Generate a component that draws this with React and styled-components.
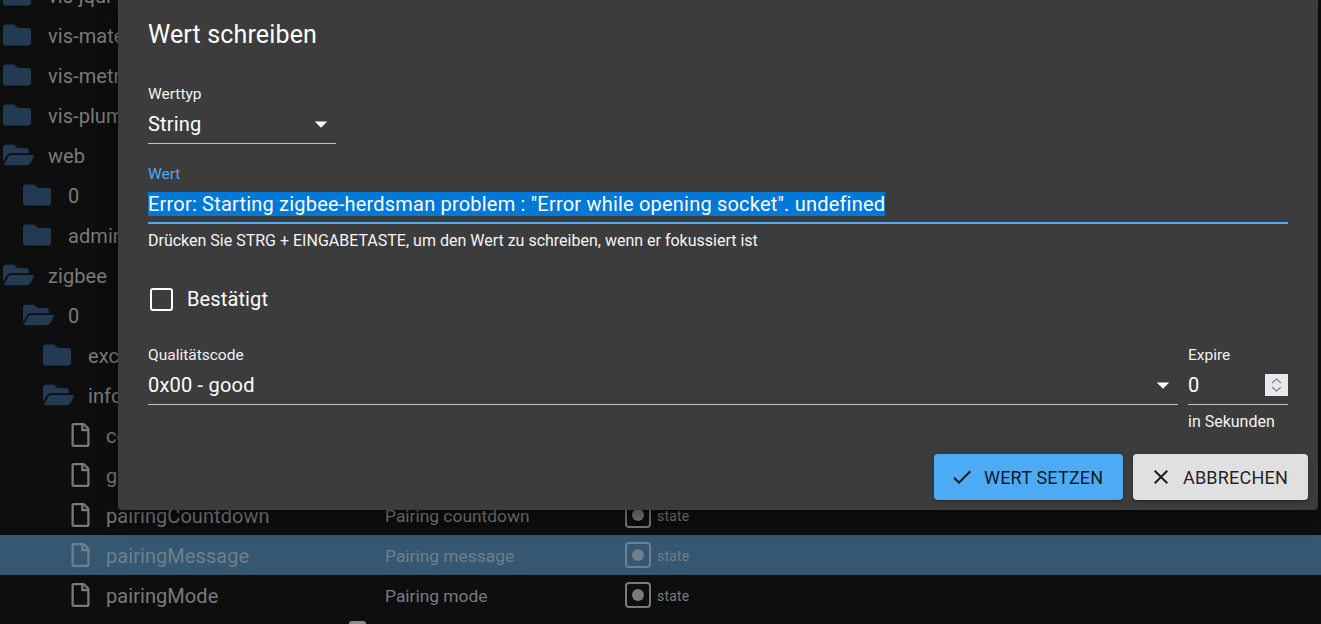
import React from "react";
import styled, { createGlobalStyle } from "styled-components";
import { FaFolder, FaFolderOpen, FaRegFile } from "react-icons/fa";
import { MdCheck, MdClose, MdArrowDropDown } from "react-icons/md";

const GlobalStyle = createGlobalStyle`
  html, body {
    margin: 0;
    height: 100%;
    overflow: hidden;
    background: #0e0e0e;
    font-family: Roboto, "Liberation Sans", sans-serif;
  }
`;

const rows = [
  { name: "vis-jqui-mobile", type: "folder", level: 0 },
  { name: "vis-materialdesign", type: "folder", level: 0 },
  { name: "vis-metro", type: "folder", level: 0 },
  { name: "vis-plumb", type: "folder", level: 0 },
  { name: "web", type: "open", level: 0 },
  { name: "0", type: "folder", level: 1 },
  { name: "admin", type: "folder", level: 1 },
  { name: "zigbee", type: "open", level: 0 },
  { name: "0", type: "open", level: 1 },
  { name: "exclude", type: "folder", level: 2 },
  { name: "info", type: "open", level: 2 },
  { name: "connection", type: "file", desc: "Connected", state: true },
  { name: "groups", type: "file", desc: "Groups", state: true },
  { name: "pairingCountdown", type: "file", desc: "Pairing countdown", state: true },
  { name: "pairingMessage", type: "file", desc: "Pairing message", state: true, selected: true },
  { name: "pairingMode", type: "file", desc: "Pairing mode", state: true },
];

const Page = styled.div`
  position: relative;
  width: 1321px;
  height: 624px;
  overflow: hidden;
`;

const Tree = styled.div`
  height: 624px;
  padding-bottom: 9px;
  box-sizing: border-box;
  display: flex;
  flex-direction: column;
  justify-content: flex-end;
`;

const Row = styled.div`
  flex: 0 0 40px;
  display: flex;
  align-items: center;
  color: ${({ $selected }) => ($selected ? "#6f7f8c" : "#7a7a7a")};
  background: ${({ $selected }) => ($selected ? "#355771" : "transparent")};
  font-size: 20px;
`;

const NameCell = styled.div`
  width: 385px;
  flex: none;
  display: flex;
  align-items: center;
  box-sizing: border-box;
  padding-left: ${({ $level }) => 3 + $level * 20}px;
`;

const FileCell = styled(NameCell)`
  padding-left: 71px;
`;

const NameText = styled.span`
  padding-top: 2px;
  letter-spacing: 0.06px;
`;

const FolderIcon = styled(FaFolder)`
  width: 28px;
  height: 28px;
  color: #223a52;
  margin-right: 17px;
`;

const OpenFolderIcon = styled(FaFolderOpen)`
  width: 31px;
  height: 28px;
  color: #223a52;
  margin-right: 14px;
`;

const FileIcon = styled(FaRegFile)`
  width: 19px;
  height: 24px;
  margin-right: 16px;
`;

const DescCell = styled.div`
  width: 240px;
  flex: none;
  padding-top: 1px;
  font-size: 17.4px;
`;

const StateCell = styled.div`
  display: flex;
  align-items: center;
  gap: 6px;
  font-size: 14px;
  letter-spacing: 0.2px;
`;

const StateText = styled.span`
  padding-top: 2px;
`;

const StateBox = styled.span`
  width: 26px;
  height: 26px;
  box-sizing: border-box;
  border: 2px solid currentColor;
  border-radius: 4px;
  display: flex;
  align-items: center;
  justify-content: center;
  &::after {
    content: "";
    width: 12px;
    height: 12px;
    border-radius: 50%;
    background: currentColor;
  }
`;

const ScrollNub = styled.span`
  position: absolute;
  left: 349px;
  top: 621px;
  width: 17px;
  height: 10px;
  border-radius: 3px;
  background: #8a8a8a;
`;

const Dialog = styled.section`
  position: absolute;
  left: 118px;
  top: 0;
  width: 1200px;
  height: 510px;
  box-sizing: border-box;
  padding: 0 30px;
  background: #3c3c3c;
  border-radius: 0 0 4px 4px;
  color: #fff;
  box-shadow: 0 8px 20px rgba(0, 0, 0, 0.4);
`;

const Title = styled.h2`
  margin: 0;
  padding-top: 20px;
  height: 65px;
  box-sizing: border-box;
  font-size: 25px;
  line-height: 30px;
  font-weight: 400;
  letter-spacing: 0.15px;
`;

const Label = styled.div`
  font-size: 15.5px;
  line-height: 18px;
  color: ${({ $focused }) => ($focused ? "#4dabf5" : "#f0f0f0")};
`;

const SelectField = styled.div`
  width: ${({ $width }) => $width};
  flex: ${({ $grow }) => ($grow ? "1" : "none")};
`;

const TypeBlock = styled.div`
  padding-top: 20px;
`;

const SelectBox = styled.div`
  height: 41px;
  box-sizing: border-box;
  display: flex;
  align-items: center;
  justify-content: space-between;
  border-bottom: 1px solid #c4c4c4;
  font-size: 20px;
  letter-spacing: 0.2px;
  padding-top: 2px;
  svg {
    width: 30px;
    height: 30px;
  }
`;

const ValueBlock = styled.div`
  padding-top: 21px;
`;

const ValueInput = styled.div`
  height: 41px;
  box-sizing: border-box;
  border-bottom: 2px solid #4dabf5;
  padding-top: 9px;
  font-size: 20px;
  line-height: 24px;
  letter-spacing: 0.2px;
`;

const Selected = styled.span`
  background: #0078d7;
  display: inline-block;
`;

const Helper = styled.div`
  font-size: 16px;
  line-height: 18px;
  margin-top: 8px;
  color: #f5f5f5;
`;

const CheckLine = styled.label`
  display: flex;
  align-items: center;
  height: 28px;
  margin-top: 35px;
  font-size: 20px;
  letter-spacing: 0.12px;
  gap: 14px;
`;

const CheckBox = styled.span`
  width: 23px;
  height: 23px;
  margin-left: 2px;
  box-sizing: border-box;
  border: 2px solid #fff;
  border-radius: 3px;
`;

const QualityRow = styled.div`
  display: flex;
  gap: 10px;
  margin-top: 33px;
`;

const SpinButton = styled.span`
  width: 23px;
  height: 22px;
  background: #e8e8ee;
  display: flex;
  align-items: center;
  justify-content: center;
  svg {
    width: 13px;
    height: 16px;
  }
`;

const Footer = styled.div`
  position: absolute;
  right: 10px;
  bottom: 10px;
  display: flex;
  gap: 10px;
`;

const Button = styled.button`
  height: 46px;
  width: ${({ $width }) => $width}px;
  border: 0;
  border-radius: 4px;
  padding: 0 0 0 16px;
  display: flex;
  align-items: center;
  gap: 10px;
  font-family: inherit;
  font-size: 18px;
  letter-spacing: 0.2px;
  color: rgba(0, 0, 0, 0.87);
  background: ${({ $primary }) => ($primary ? "#4dabf5" : "#e0e0e0")};
  box-shadow: 0 3px 1px -2px rgba(0, 0, 0, 0.2), 0 2px 2px rgba(0, 0, 0, 0.14), 0 1px 5px rgba(0, 0, 0, 0.12);
  svg {
    width: 24px;
    height: 24px;
  }
`;

const TreeRow = ({ row }) => {
  if (row.type === "file") {
    return (
      <Row $selected={row.selected}>
        <FileCell $level={0}>
          <FileIcon />
          <NameText>{row.name}</NameText>
        </FileCell>
        <DescCell>{row.desc}</DescCell>
        <StateCell>
          <StateBox />
          <StateText>state</StateText>
        </StateCell>
      </Row>
    );
  }
  return (
    <Row>
      <NameCell $level={row.level}>
        {row.type === "open" ? <OpenFolderIcon /> : <FolderIcon />}
        <NameText>{row.name}</NameText>
      </NameCell>
    </Row>
  );
};

const App = () => {
  return (
    <Page>
      <GlobalStyle />
      <Tree>
        {rows.map((row, i) => (
          <TreeRow key={i} row={row} />
        ))}
      </Tree>
      <ScrollNub />
      <Dialog>
        <Title>Wert schreiben</Title>
        <TypeBlock>
          <SelectField $width="188px">
            <Label>Werttyp</Label>
            <SelectBox>
              String
              <MdArrowDropDown />
            </SelectBox>
          </SelectField>
        </TypeBlock>
        <ValueBlock>
          <Label $focused>Wert</Label>
          <ValueInput>
            <Selected>Error: Starting zigbee-herdsman problem : "Error while opening socket". undefined</Selected>
          </ValueInput>
          <Helper>Drücken Sie STRG + EINGABETASTE, um den Wert zu schreiben, wenn er fokussiert ist</Helper>
        </ValueBlock>
        <CheckLine>
          <CheckBox />
          Bestätigt
        </CheckLine>
        <QualityRow>
          <SelectField $grow>
            <Label>Qualitätscode</Label>
            <SelectBox>
              0x00 - good
              <MdArrowDropDown />
            </SelectBox>
          </SelectField>
          <SelectField $width="100px">
            <Label>Expire</Label>
            <SelectBox>
              0
              <SpinButton>
                <svg viewBox="0 0 13 16" fill="none" stroke="#8d8d95" strokeWidth="1.5">
                  <path d="M2 6l4.500-4 4.500 4M2 10l4.500 4 4.500-4" />
                </svg>
              </SpinButton>
            </SelectBox>
            <Helper>in Sekunden</Helper>
          </SelectField>
        </QualityRow>
        <Footer>
          <Button $primary $width={189}>
            <MdCheck />
            WERT SETZEN
          </Button>
          <Button $width={175}>
            <MdClose />
            ABBRECHEN
          </Button>
        </Footer>
      </Dialog>
    </Page>
  );
};

export default App;
